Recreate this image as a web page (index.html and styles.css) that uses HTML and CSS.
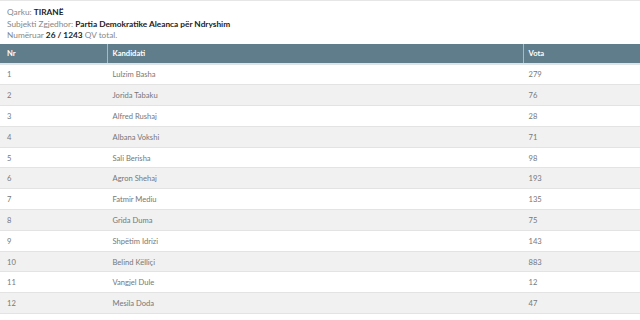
FILE: index.html
```html
<!DOCTYPE html>
<html>
<head>
<meta charset="utf-8">
<link rel="stylesheet" href="styles.css">
</head>
<body>
<div class="page">
  <div class="info">
    <div>Qarku: <b>TIRANË</b></div>
    <div>Subjekti Zgjedhor: <b>Partia Demokratike Aleanca për Ndryshim</b></div>
    <div>Numëruar <b>26 / 1243</b> QV total.</div>
  </div>
  <table class="results">
    <thead>
      <tr><th class="c-nr">Nr</th><th class="c-name">Kandidati</th><th class="c-vota">Vota</th></tr>
    </thead>
    <tbody>
      <tr><td>1</td><td>Lulzim Basha</td><td>279</td></tr>
      <tr><td>2</td><td>Jorida Tabaku</td><td>76</td></tr>
      <tr><td>3</td><td>Alfred Rushaj</td><td>28</td></tr>
      <tr><td>4</td><td>Albana Vokshi</td><td>71</td></tr>
      <tr><td>5</td><td>Sali Berisha</td><td>98</td></tr>
      <tr><td>6</td><td>Agron Shehaj</td><td>193</td></tr>
      <tr><td>7</td><td>Fatmir Mediu</td><td>135</td></tr>
      <tr><td>8</td><td>Grida Duma</td><td>75</td></tr>
      <tr><td>9</td><td>Shpëtim Idrizi</td><td>143</td></tr>
      <tr><td>10</td><td>Belind Këlliçi</td><td>883</td></tr>
      <tr><td>11</td><td>Vangjel Dule</td><td>12</td></tr>
      <tr><td>12</td><td>Mesila Doda</td><td>47</td></tr>
    </tbody>
  </table>
</div>
</body>
</html>
```
FILE: styles.css
```css
html, body {
  margin: 0;
  padding: 0;
  background: #fff;
}
body {
  font-family: Lato, "Open Sans", sans-serif;
  color: #777;
}
.page {
  border-top: 1px solid #e6e6e6;
}
.info {
  padding: 6px 7px 2px;
  font-size: 8.3px;
  line-height: 11.5px;
  color: #888;
}
.info b {
  color: #222;
  font-weight: 700;
}
.results {
  width: 640px;
  border-collapse: collapse;
  font-size: 7.6px;
  table-layout: fixed;
}
.results th {
  box-sizing: border-box;
  background: #607d8b;
  color: #fff;
  font-weight: 700;
  text-align: left;
  padding: 0 5px;
  height: 20px;
  border-left: 1px solid #a9bac2;
  border-bottom: 2px solid #dde3e6;
}
.results th:first-child {
  border-left: none;
  padding-left: 7px;
}
.results .c-nr { width: 107px; }
.results .c-name { width: 416px; }
.results td {
  padding: 0 5px;
  height: 19.8px;
  line-height: 10px;
  color: #777;
  border-bottom: 1px solid #e3e3e3;
  border-left: 1px solid transparent;
}
.results td:first-child {
  border-left: none;
  padding-left: 7px;
}
.results tbody tr:nth-child(even) td {
  background: #f1f1f1;
}
```
